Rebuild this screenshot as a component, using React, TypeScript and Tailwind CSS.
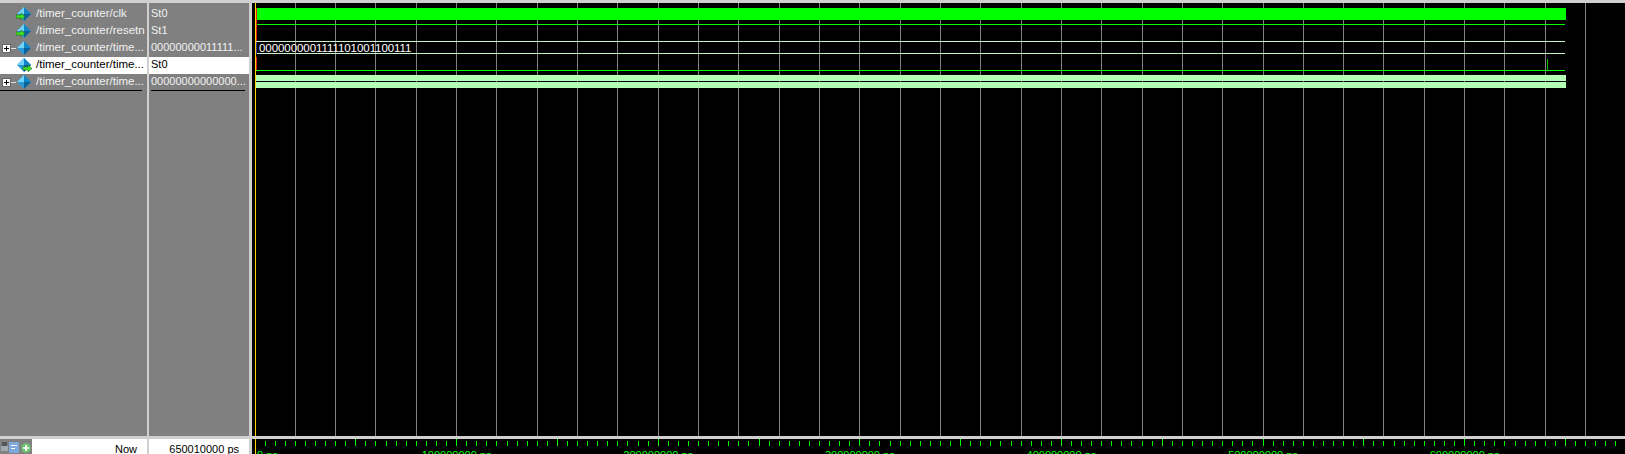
const rows = [
  { name: '/timer_counter/clk', value: 'St0', arrow: 'left' },
  { name: '/timer_counter/resetn', value: 'St1', arrow: 'left' },
  { name: '/timer_counter/time...', value: '00000000011111...', bus: true },
  { name: '/timer_counter/time...', value: 'St0', arrow: 'right', selected: true },
  { name: '/timer_counter/time...', value: '00000000000000...', bus: true },
];

// wave window x coordinates are page coordinates (svg viewBox starts at 252)
const grid = Array.from({ length: 34 }, (_, i) => Math.floor(255 + i * 40.32));
const ticks = Array.from({ length: 136 }, (_, i) => Math.floor(255 + i * 10.08));
const labels = [100, 200, 300, 400, 500, 600];

function SignalIcon({ arrow }: { arrow?: string }) {
  return (
    <svg width="16" height="15" viewBox="0 0 16 15" className="shrink-0">
      <path d="M8 0 L15 7 L8 14 L1 7 Z" fill="#2a9ad6" />
      <path d="M8 0 L15 7 L8 7 Z" fill="#1286c8" />
      <path d="M8 0 L1 7 L8 7 Z" fill="#74d4f7" />
      <path d="M8 14 L15 7 L8 7 Z" fill="#0b6299" />
      {arrow === 'left' && (
        <path d="M0 8 H5 V6 L9 9.5 L5 13 V11 H0 Z" fill="#3fe022" stroke="#17560f" strokeWidth="0.5" />
      )}
      {arrow === 'right' && (
        <path d="M7 9 H12 V7 L16 10.5 L12 14 V12 H7 Z" fill="#3fe022" stroke="#17560f" strokeWidth="0.5" />
      )}
    </svg>
  );
}

function Expander() {
  return (
    <div className="flex items-center w-[16px] pl-[2px] shrink-0">
      <span className="w-[9px] h-[9px] bg-white border border-[#666] flex items-center justify-center">
        <svg width="7" height="7" viewBox="0 0 7 7">
          <path d="M3 1h1v2h2v1H4v2H3V4H1V3h2z" fill="#000" />
        </svg>
      </span>
      <span className="h-px w-[5px] bg-[#e0e0e0]" />
    </div>
  );
}

function Waves() {
  return (
    <svg width="1373" height="433" viewBox="252 3 1373 433" className="block">
      {grid.map((x) => (
        <rect key={x} x={x} y="3" width="1" height="433" fill="#808080" />
      ))}
      <rect x="255" y="3" width="1" height="433" fill="#ffd400" />

      {/* clk */}
      <rect x="256" y="8" width="1310" height="12" fill="#00ff00" />
      <rect x="256" y="24" width="1309" height="1" fill="#00ff00" />

      {/* count bus */}
      <rect x="256" y="41" width="1309" height="1" fill="#c8f5c8" />
      <rect x="256" y="53" width="1309" height="1" fill="#c8f5c8" />
      <text x="259" y="52" fill="#ffffff" fontFamily="Liberation Sans, Arial, sans-serif" fontSize="11.5" letterSpacing="-0.06">
        0000000001111101001100111
      </text>

      {/* done pulse */}
      <rect x="256" y="70" width="1309" height="1" fill="#00ff00" />
      <rect x="1547" y="59" width="1" height="11" fill="#00c000" />

      {/* last bus */}
      <rect x="256" y="75" width="1310" height="6" fill="#b3ffb3" />
      <rect x="256" y="82" width="1310" height="6" fill="#b3ffb3" />

      {/* time zero markers */}
      <rect x="256" y="8" width="1" height="33" fill="#e02010" />
      <rect x="256" y="42" width="1" height="12" fill="#3030a0" />
      <rect x="256" y="57" width="1" height="13" fill="#e02010" />
    </svg>
  );
}

function Ruler() {
  return (
    <svg width="1373" height="15" viewBox="252 439 1373 15" className="block">
      <rect x="255" y="439" width="1" height="15" fill="#ffd400" />
      {ticks.map((x, i) =>
        i === 0 ? null : (
          <rect key={x} x={x} y={i % 10 === 0 ? 439 : 441} width="1" height={i % 10 === 0 ? 7 : 5} fill="#00ff00" />
        ),
      )}
      <text x="257" y="459" fill="#00ff00" fontFamily="Liberation Sans, Arial, sans-serif" fontSize="11">
        0 ps
      </text>
      {labels.map((l, i) => (
        <text
          key={l}
          x={456.6 + i * 201.6}
          y="459"
          textAnchor="middle"
          fill="#00ff00"
          fontFamily="Liberation Sans, Arial, sans-serif"
          fontSize="11"
        >
          {l}000000 ps
        </text>
      ))}
    </svg>
  );
}

export default function App() {
  return (
    <div className="w-[1625px] h-[454px] overflow-hidden flex flex-col bg-[#d0d0d0] font-['Liberation_Sans',Arial,sans-serif]">
      <div className="h-[3px] shrink-0 bg-[#d0d0d0]" />

      {/* panes */}
      <div className="h-[433px] flex shrink-0">
        <div className="w-[147px] bg-[#808080] pt-[3px] shrink-0">
          {rows.map((r, i) => (
            <div key={i} className={`h-[17px] flex items-center text-[11.5px] ${r.selected ? 'bg-white text-black' : 'text-[#f2f2f2]'}`}>
              {r.bus ? <Expander /> : <div className="w-[16px] shrink-0" />}
              <SignalIcon arrow={r.arrow} />
              <span className="ml-[4px] pb-[2px] whitespace-nowrap">{r.name}</span>
            </div>
          ))}
          <div className="-mt-px h-px bg-black mr-[5px]" />
        </div>

        <div className="w-[100px] ml-[2px] bg-[#808080] pt-[3px] shrink-0">
          {rows.map((r, i) => (
            <div key={i} className={`h-[17px] flex items-center pl-[2px] pb-[2px] text-[11px] whitespace-nowrap ${r.selected ? 'bg-white text-black' : 'text-[#f2f2f2]'}`}>
              {r.value}
            </div>
          ))}
          <div className="-mt-px h-px bg-black ml-[2px] mr-[4px]" />
        </div>

        <div className="ml-[3px] flex-1 bg-black">
          <Waves />
        </div>
      </div>

      <div className="h-[3px] shrink-0 bg-[#d0d0d0]" />

      {/* cursor row */}
      <div className="h-[15px] flex shrink-0">
        <div className="w-[147px] bg-white flex justify-between shrink-0">
          <div className="w-[32px] h-[15px] bg-[#808080] flex items-center pl-[1px]">
            <svg width="31" height="15" viewBox="0 0 31 15">
              <rect x="1" y="3" width="5" height="5" fill="#555" />
              <rect x="0" y="7" width="7" height="5" fill="#a0a8b0" />
              <rect x="8" y="3" width="10" height="11" fill="#7fa8dc" />
              <rect x="10" y="6" width="6" height="1" fill="#ffffff" />
              <rect x="10" y="9" width="4" height="1" fill="#ffffff" />
              <circle cx="25" cy="9" r="5" fill="#6cc070" />
              <path d="M24 6h2v2h2v2h-2v2h-2v-2h-2V8h2z" fill="#e8f8e8" />
            </svg>
          </div>
          <span className="pr-[10px] text-[11px] leading-[21px] text-black">Now</span>
        </div>
        <div className="w-[100px] ml-[2px] bg-white text-right pr-[10px] text-[11px] leading-[21px] text-black whitespace-nowrap shrink-0">
          650010000 ps
        </div>
        <div className="ml-[3px] flex-1 bg-black">
          <Ruler />
        </div>
      </div>
    </div>
  );
}
